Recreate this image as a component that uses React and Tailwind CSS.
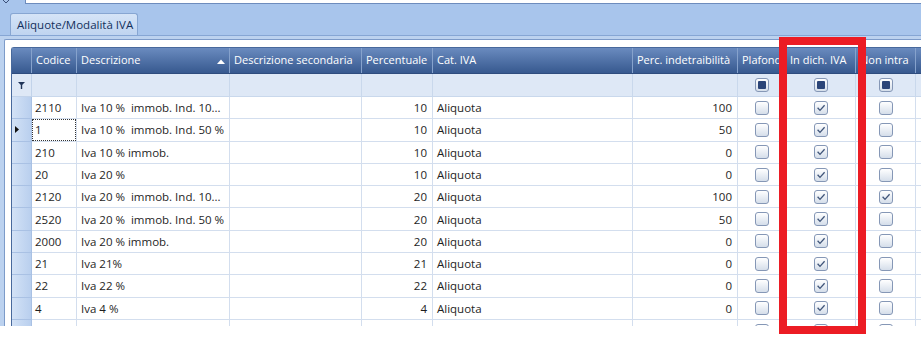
const rows = [
  { code: '2110', desc: 'Iva 10 %  immob. Ind. 10...', perc: '10', ind: '100', pl: false, dich: true, intra: false },
  { code: '1', desc: 'Iva 10 %  immob. Ind. 50 %', perc: '10', ind: '50', pl: false, dich: true, intra: false, current: true },
  { code: '210', desc: 'Iva 10 % immob.', perc: '10', ind: '0', pl: false, dich: true, intra: false },
  { code: '20', desc: 'Iva 20 %', perc: '10', ind: '0', pl: false, dich: true, intra: false },
  { code: '2120', desc: 'Iva 20 %  immob. Ind. 10...', perc: '20', ind: '100', pl: false, dich: true, intra: true },
  { code: '2520', desc: 'Iva 20 %  immob. Ind. 50 %', perc: '20', ind: '50', pl: false, dich: true, intra: false },
  { code: '2000', desc: 'Iva 20 % immob.', perc: '20', ind: '0', pl: false, dich: true, intra: false },
  { code: '21', desc: 'Iva 21%', perc: '21', ind: '0', pl: false, dich: true, intra: false },
  { code: '22', desc: 'Iva 22 %', perc: '22', ind: '0', pl: false, dich: true, intra: false },
  { code: '4', desc: 'Iva 4 %', perc: '4', ind: '0', pl: false, dich: true, intra: false },
  { code: '', desc: '', perc: '', ind: '', pl: false, dich: true, intra: false },
];

const cols = 'grid grid-cols-[20px_45px_153px_132px_71px_200px_105px_48px_70px_60px_1fr]';

function Check({ checked, filter }) {
  return (
    <span className="inline-flex w-[14px] h-[14px] items-center justify-center rounded-[3px] border border-[#8597b6] bg-gradient-to-b from-white to-[#d5deea]">
      {checked && (
        <svg width="10" height="10" viewBox="0 0 10 10">
          <path d="M1.6 4.8 L4 7.4 L8.6 2.2" stroke="#3f5479" strokeWidth="1.3" fill="none" />
        </svg>
      )}
      {filter && <span className="w-[8px] h-[8px] rounded-[1px] bg-[#2b4578]" />}
    </span>
  );
}

function HeadCell({ children, sort }) {
  return (
    <div className="relative flex items-center pl-[4px] border-r border-[#86a2cc] whitespace-nowrap overflow-hidden">
      {children}
      {sort && (
        <svg className="absolute right-[4px] top-[11px]" width="8" height="5" viewBox="0 0 8 5">
          <path d="M0 5 L4 0.5 L8 5 Z" fill="#ffffff" />
        </svg>
      )}
    </div>
  );
}

export default function App() {
  const cell = 'flex items-center border-r border-b border-[#d3deee] whitespace-pre overflow-hidden';
  return (
    <div className="relative w-[921px] h-[344px] bg-white overflow-hidden font-['Open_Sans',sans-serif] text-[11.5px]">
      <div className="h-[326px] bg-[#a8c5ec] flex flex-col overflow-hidden">
        {/* top strip */}
        <div className="h-[13px] shrink-0 flex items-start">
          <svg className="ml-[3px]" width="6" height="3" viewBox="0 0 6 3">
            <path d="M0 0 L3 3 L6 0" stroke="#3b5078" strokeWidth="1" fill="none" />
          </svg>
          <div className="ml-[16px] flex-1 h-[4px] bg-white border-b border-l border-[#6d8cbd]" />
        </div>

        {/* tab */}
        <div className="h-[22px] shrink-0 pl-[10px] flex items-end">
          <div className="w-[128px] h-[22px] flex items-center pl-[6px] whitespace-nowrap rounded-t-[3px] border border-b-0 border-[#87a6d2] bg-gradient-to-b from-[#d5e4f7] to-[#bfd4f0] text-[#13305c] text-[11.5px]">
            Aliquote/Modalità IVA
          </div>
        </div>

        {/* panel */}
        <div className="flex-1 min-h-0 overflow-hidden border-t border-[#86a6d4] bg-[#bcd2ef] pt-[3px] pl-[4px]">
          <div className="h-full bg-white border-l border-t border-[#7d9bc9] rounded-tl-[2px] pt-[7px] pl-[6px]">
            <div className="border-l border-t border-[#48699c] rounded-tl-[3px]">
              {/* header */}
              <div className={`${cols} h-[26px] bg-gradient-to-b from-[#6a8bbf] to-[#37598f] text-white text-[11px] border-b border-[#2e4c7e]`}>
                <div className="border-r border-[#86a2cc]" />
                <HeadCell>Codice</HeadCell>
                <HeadCell sort>Descrizione</HeadCell>
                <HeadCell>Descrizione secondaria</HeadCell>
                <HeadCell>Percentuale</HeadCell>
                <HeadCell>Cat. IVA</HeadCell>
                <HeadCell>Perc. indetraibilità</HeadCell>
                <HeadCell>Plafond</HeadCell>
                <HeadCell>In dich. IVA</HeadCell>
                <HeadCell>Non intra</HeadCell>
                <div />
              </div>

              {/* filter row */}
              <div className={`${cols} h-[23px] bg-[#dee8f6]`}>
                <div className="flex items-center justify-center border-r border-b border-[#c2d3ea]">
                  <svg width="7" height="7" viewBox="0 0 7 7">
                    <path d="M0 0 H7 L4.2 3 V7 H2.8 V3 Z" fill="#1f3458" />
                  </svg>
                </div>
                {[0, 1, 2, 3, 4, 5].map((i) => (
                  <div key={i} className="border-r border-b border-[#c9d8ec]" />
                ))}
                {[0, 1, 2].map((i) => (
                  <div key={'c' + i} className="flex items-center justify-center border-r border-b border-[#c9d8ec]">
                    <Check filter />
                  </div>
                ))}
                <div className="border-b border-[#c9d8ec]" />
              </div>

              {/* data rows */}
              {rows.map((r, idx) => (
                <div key={idx} className={`${cols} h-[22.3px] text-[#1e1e1e]`}>
                  <div className="flex items-center pl-[3px] border-r border-b border-[#a9c1e4] bg-gradient-to-r from-[#d3e2f6] to-[#b9cfee]">
                    {r.current && (
                      <svg width="4" height="7" viewBox="0 0 4 7">
                        <path d="M0 0 L4 3.5 L0 7 Z" fill="#111111" />
                      </svg>
                    )}
                  </div>
                  <div className={`${cell} pl-[3px] relative`}>
                    {r.current && <span className="absolute inset-[0px] border border-dotted border-[#333333]" />}
                    {r.code}
                  </div>
                  <div className={`${cell} pl-[4px]`}>{r.desc}</div>
                  <div className={cell} />
                  <div className={`${cell} justify-end pr-[5px]`}>{r.perc}</div>
                  <div className={`${cell} pl-[4px]`}>{r.perc ? 'Aliquota' : ''}</div>
                  <div className={`${cell} justify-end pr-[5px]`}>{r.ind}</div>
                  <div className={`${cell} justify-center`}>
                    <Check checked={r.pl} />
                  </div>
                  <div className={`${cell} justify-center`}>
                    <Check checked={r.dich} />
                  </div>
                  <div className={`${cell} justify-center`}>
                    <Check checked={r.intra} />
                  </div>
                  <div className="border-b border-[#d3deee]" />
                </div>
              ))}
            </div>
          </div>
        </div>
      </div>

      {/* highlight box */}
      <div className="absolute left-[779px] top-[37px] w-[87px] h-[297px] border-[8px] border-[#ec1c24]" />
    </div>
  );
}
